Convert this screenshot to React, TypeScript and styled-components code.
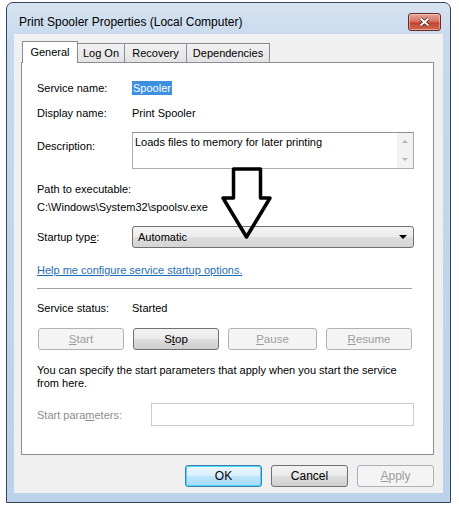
import React from "react";
import styled, { createGlobalStyle, css } from "styled-components";

const GlobalStyle = createGlobalStyle`
  html, body {
    margin: 0;
    padding: 0;
    background: #ffffff;
  }
  body {
    font-family: "Liberation Sans", Arial, sans-serif;
    font-size: 11px;
    color: #000;
  }
`;

const Page = styled.div`
  position: relative;
  width: 459px;
  height: 510px;
  overflow: hidden;
`;

const Window = styled.div`
  box-sizing: border-box;
  margin: 2px 0 0 6px;
  width: 445px;
  height: 501px;
  border: 1px solid #34465c;
  border-radius: 7px 7px 0 0;
  background: linear-gradient(to bottom, #d6e3f1 0px, #c6d9ed 40px, #bad2ea 100%);
  display: flex;
  flex-direction: column;
`;

const TitleBar = styled.div`
  height: 31px;
  box-sizing: border-box;
  display: flex;
  align-items: flex-start;
  justify-content: space-between;
  padding: 10px 9px 0 12px;
`;

const TitleText = styled.div`
  margin-top: 2px;
  font-size: 12px;
  line-height: 14px;
  color: #000;
`;

const CloseButton = styled.div`
  box-sizing: border-box;
  width: 33px;
  height: 18px;
  border: 1px solid #6b2a25;
  border-radius: 3px;
  background: linear-gradient(to bottom, #e6a598 0%, #d57766 45%, #c4432f 55%, #cf6a52 100%);
  display: flex;
  align-items: center;
  justify-content: center;
  box-shadow: inset 0 0 0 1px rgba(255, 220, 210, 0.5);
`;

const Client = styled.div`
  flex: 1;
  margin: 0 7px 9px 7px;
  padding: 7px 9px 6px 7px;
  background: #f0f0f0;
  display: flex;
  flex-direction: column;
`;

const TabStrip = styled.div`
  height: 21px;
  display: flex;
  align-items: flex-end;
  padding-left: 1px;
  position: relative;
  z-index: 1;
`;

const Tab = styled.div<{ $active?: boolean; $width: number }>`
  box-sizing: border-box;
  width: ${(p) => p.$width}px;
  height: 19px;
  border: 1px solid #898c95;
  border-bottom: none;
  margin-right: -1px;
  background: linear-gradient(to bottom, #f2f2f2, #e3e3e3);
  display: flex;
  align-items: center;
  justify-content: center;
  line-height: 13px;
  padding-top: 1px;
  ${(p) =>
    p.$active &&
    css`
      height: 22px;
      margin-bottom: -1px;
      background: #ffffff;
      padding-top: 0;
      padding-bottom: 1px;
      z-index: 2;
    `}
`;

const Panel = styled.div`
  box-sizing: border-box;
  height: 393px;
  border: 1px solid #898c95;
  background: #ffffff;
  padding: 17px 0 0 15px;
  display: flex;
  flex-direction: column;
`;

const Row = styled.div<{ $mt: number; $align?: string }>`
  display: flex;
  align-items: ${(p) => p.$align || "center"};
  margin-top: ${(p) => p.$mt}px;
  min-height: 16px;
`;

const Label = styled.div<{ $w?: number; $disabled?: boolean; $pt?: number }>`
  width: ${(p) => p.$w ?? 95}px;
  flex-shrink: 0;
  line-height: 16px;
  padding-top: ${(p) => p.$pt ?? 0}px;
  color: ${(p) => (p.$disabled ? "#8d8d8d" : "#000")};
`;

const Value = styled.div`
  line-height: 16px;
`;

const Selected = styled.span`
  background: #3d8fe0;
  color: #ffffff;
  padding: 1px 1px;
  line-height: 14px;
`;

const TextLine = styled.div<{ $mt: number }>`
  margin-top: ${(p) => p.$mt}px;
  line-height: 16px;
`;

const DescBox = styled.div`
  box-sizing: border-box;
  width: 282px;
  height: 37px;
  border: 1px solid #abadb3;
  border-top-color: #8e9097;
  display: flex;
  background: #fff;
`;

const DescText = styled.div`
  flex: 1;
  padding: 2px 2px;
  line-height: 14px;
`;

const ScrollTrack = styled.div`
  width: 16px;
  background: #f2f2f2;
  display: flex;
  flex-direction: column;
  align-items: center;
  justify-content: space-between;
  padding: 7px 0 7px;
`;

const Combo = styled.div`
  box-sizing: border-box;
  width: 282px;
  height: 22px;
  border: 1px solid #707070;
  border-radius: 3px;
  background: linear-gradient(to bottom, #f4f4f4 0%, #ececec 48%, #dedede 52%, #d4d4d4 100%);
  display: flex;
  align-items: center;
  justify-content: space-between;
  padding: 0 6px 0 5px;
`;

const Link = styled.a`
  color: #1f6cb0;
  text-decoration: underline;
  line-height: 16px;
`;

const Separator = styled.div<{ $mt: number }>`
  margin-top: ${(p) => p.$mt}px;
  width: 375px;
  height: 1px;
  background: #a0a0a0;
`;

const ButtonRow = styled.div<{ $mt: number }>`
  margin-top: ${(p) => p.$mt}px;
  margin-left: 1px;
  width: 375px;
  display: grid;
  grid-template-columns: 86px 86px 89px 86px;
  column-gap: 9px;
`;

const Button = styled.div<{ $kind?: "normal" | "disabled" | "default" }>`
  box-sizing: border-box;
  height: 22px;
  border-radius: 3px;
  display: flex;
  align-items: center;
  justify-content: center;
  font-size: 11.5px;
  border: 1px solid #707070;
  background: linear-gradient(to bottom, #f2f2f2 0%, #ebebeb 48%, #dddddd 52%, #cfcfcf 100%);
  color: #000;
  ${(p) =>
    p.$kind === "disabled" &&
    css`
      border-color: #adb2b5;
      background: #f4f4f4;
      color: #9c9c9c;
    `}
  ${(p) =>
    p.$kind === "default" &&
    css`
      border-color: #3c7fb1;
      background: linear-gradient(to bottom, #eaf6fd 0%, #d9f0fc 48%, #bee6fd 52%, #a7d9f5 100%);
      box-shadow: inset 0 0 0 1px #48d8fb;
    `}
`;

const ParamText = styled.div<{ $mt: number }>`
  margin-top: ${(p) => p.$mt}px;
  width: 380px;
  line-height: 13px;
`;

const ParamInput = styled.div`
  box-sizing: border-box;
  width: 263px;
  height: 23px;
  border: 1px solid #c8cbd1;
  background: #fff;
`;

const Footer = styled.div`
  margin-top: 10px;
  display: flex;
  justify-content: flex-end;
  gap: 9px;
`;

const FooterButton = styled(Button)`
  width: 77px;
  font-size: 12px;
`;

const ArrowOverlay = styled.svg`
  position: absolute;
  left: 219px;
  top: 164px;
`;

const U = styled.span`
  text-decoration: underline;
`;

const Triangle = styled.div<{ $dir: "up" | "down"; $color: string; $size: number }>`
  width: 0;
  height: 0;
  border-left: ${(p) => p.$size}px solid transparent;
  border-right: ${(p) => p.$size}px solid transparent;
  ${(p) =>
    p.$dir === "up"
      ? css`
          border-bottom: ${p.$size}px solid ${p.$color};
        `
      : css`
          border-top: ${p.$size}px solid ${p.$color};
        `}
`;

export default function App() {
  return (
    <Page>
      <GlobalStyle />
      <Window>
        <TitleBar>
          <TitleText>Print Spooler Properties (Local Computer)</TitleText>
          <CloseButton>
            <svg width="11" height="10" viewBox="0 0 11 10">
              <path d="M1.5 1.5 L9.5 8.5 M9.5 1.5 L1.5 8.5" stroke="#3a1410" strokeWidth="3.4" />
              <path d="M1.5 1.5 L9.5 8.5 M9.5 1.5 L1.5 8.5" stroke="#ffffff" strokeWidth="2" />
            </svg>
          </CloseButton>
        </TitleBar>

        <Client>
          <TabStrip>
            <Tab $active $width={56}>General</Tab>
            <Tab $width={48}>Log On</Tab>
            <Tab $width={63}>Recovery</Tab>
            <Tab $width={84}>Dependencies</Tab>
          </TabStrip>

          <Panel>
            <Row $mt={0}>
              <Label>Service name:</Label>
              <Value>
                <Selected>Spooler</Selected>
              </Value>
            </Row>
            <Row $mt={9}>
              <Label>Display name:</Label>
              <Value>Print Spooler</Value>
            </Row>
            <Row $mt={11} $align="flex-start">
              <Label $pt={6}>Description:</Label>
              <DescBox>
                <DescText>Loads files to memory for later printing</DescText>
                <ScrollTrack>
                  <Triangle $dir="up" $color="#b5b5b5" $size={3} />
                  <Triangle $dir="down" $color="#b5b5b5" $size={3} />
                </ScrollTrack>
              </DescBox>
            </Row>
            <TextLine $mt={12}>Path to executable:</TextLine>
            <TextLine $mt={2}>C:\Windows\System32\spoolsv.exe</TextLine>
            <Row $mt={11}>
              <Label>
                Startup typ<U>e</U>:
              </Label>
              <Combo>
                <span>Automatic</span>
                <Triangle $dir="down" $color="#000" $size={4} />
              </Combo>
            </Row>
            <Row $mt={14}>
              <Link>Help me configure service startup options.</Link>
            </Row>
            <Separator $mt={10} />
            <Row $mt={11}>
              <Label>Service status:</Label>
              <Value>Started</Value>
            </Row>
            <ButtonRow $mt={12}>
              <Button $kind="disabled">
                <U>S</U>tart
              </Button>
              <Button>
                S<U>t</U>op
              </Button>
              <Button $kind="disabled">
                <U>P</U>ause
              </Button>
              <Button $kind="disabled">
                <U>R</U>esume
              </Button>
            </ButtonRow>
            <ParamText $mt={14}>
              You can specify the start parameters that apply when you start the service from here.
            </ParamText>
            <Row $mt={13}>
              <Label $w={114} $disabled>
                Start para<U>m</U>eters:
              </Label>
              <ParamInput />
            </Row>
          </Panel>

          <Footer>
            <FooterButton $kind="default">OK</FooterButton>
            <FooterButton>Cancel</FooterButton>
            <FooterButton $kind="disabled">
              <U>A</U>pply
            </FooterButton>
          </Footer>
        </Client>
      </Window>

      <ArrowOverlay width="56" height="78" viewBox="0 0 56 78">
        <path
          d="M14.5 5 L41.5 5 L41.5 34 L51 34 L27.5 73 L4 34 L14.5 34 Z"
          fill="none"
          stroke="#000"
          strokeWidth="3.5"
          strokeLinejoin="round"
        />
      </ArrowOverlay>
    </Page>
  );
}
